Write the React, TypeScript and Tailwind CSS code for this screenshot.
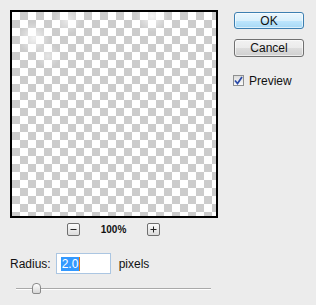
import React from 'react';

function ZoomButton({ plus }: { plus?: boolean }) {
  return (
    <div className="w-[13px] h-[13px] rounded-[2px] border border-[#6f6f6f] bg-[linear-gradient(#fbfbfb,#dcdcdc)] flex items-center justify-center">
      <svg width="7" height="7" viewBox="0 0 7 7">
        <rect x="0.5" y="3" width="6" height="1" fill="#222" />
        {plus && <rect x="3" y="0.5" width="1" height="6" fill="#222" />}
      </svg>
    </div>
  );
}

export default function App() {
  return (
    <div className="w-[316px] h-[305px] bg-[#ececec] font-['Liberation_Sans',Arial,sans-serif] text-[12px] text-[#111] flex flex-col overflow-hidden">
      <div className="flex">
        <div className="flex flex-col pl-[10px] pt-[10px]">
          <div className="w-[208px] h-[208px] border-2 border-black bg-[radial-gradient(circle_at_22px_26px,rgba(255,255,255,0.75),transparent_16px),radial-gradient(circle_at_56px_8px,rgba(255,255,255,0.6),transparent_14px),radial-gradient(circle_at_140px_4px,rgba(255,255,255,0.8),transparent_16px),radial-gradient(circle_at_36px_44px,rgba(255,255,255,0.5),transparent_12px),conic-gradient(#cccccc_25%,#ffffff_0_50%,#cccccc_0_75%,#ffffff_0)] bg-[length:auto,auto,auto,auto,16px_16px]" />
          <div className="flex justify-center items-center gap-[21px] mt-[5px] h-[13px] pr-[1px]">
            <ZoomButton />
            <span className="font-bold text-[10px] leading-none">100%</span>
            <ZoomButton plus />
          </div>
        </div>
        <div className="flex flex-col ml-[16px] pt-[12px] w-[70px]">
          <button className="h-[17px] rounded-[3px] border border-[#3c7fb1] bg-[linear-gradient(#eaf6fd_0%,#d9f0fc_50%,#bee6fd_51%,#a7d9f5_100%)] shadow-[inset_0_0_0_1px_rgba(255,255,255,0.6)] text-[12px] leading-none text-[#111]">
            OK
          </button>
          <button className="h-[18px] mt-[10px] rounded-[3px] border border-[#707070] bg-[linear-gradient(#f2f2f2_0%,#ebebeb_50%,#dddddd_51%,#cfcfcf_100%)] shadow-[inset_0_0_0_1px_rgba(255,255,255,0.6)] text-[12px] leading-none text-[#111]">
            Cancel
          </button>
          <label className="flex items-center mt-[17px] -ml-[1px] h-[13px]">
            <span className="w-[11px] h-[11px] border border-[#8e8f8f] bg-[linear-gradient(#dcdcdc,#fafafa)] flex items-center justify-center">
              <svg width="9" height="9" viewBox="0 0 9 9">
                <path d="M1 4.5 L3.5 7.5 L8 1" fill="none" stroke="#2a4aa8" strokeWidth="1.7" />
              </svg>
            </span>
            <span className="ml-[5px] leading-none">Preview</span>
          </label>
        </div>
      </div>

      <div className="flex items-center mt-[17px] pl-[10px] h-[21px]">
        <span className="leading-none">Radius:</span>
        <div className="ml-[5px] w-[55px] h-[21px] border border-[#abc6e2] bg-white flex items-center pl-[4px]">
          <span className="bg-[#3399ff] text-white px-[1px] h-[14px] leading-[14px] text-[12px]">2.0</span>
          <span className="w-[1px] h-[14px] bg-[#e0780f]" />
        </div>
        <span className="ml-[8px] leading-none">pixels</span>
      </div>

      <div className="mt-[9px] ml-[16px] w-[195px] h-[11px] relative flex items-center">
        <div className="w-full h-[2px] bg-[#a9a9a9] border-b border-white" />
        <div className="absolute left-[16px] top-0 w-[9px] h-[11px] rounded-t-[4px] rounded-b-[2px] border border-[#8a8a8a] bg-[linear-gradient(#ffffff,#d6d6d6)]" />
      </div>
    </div>
  );
}
